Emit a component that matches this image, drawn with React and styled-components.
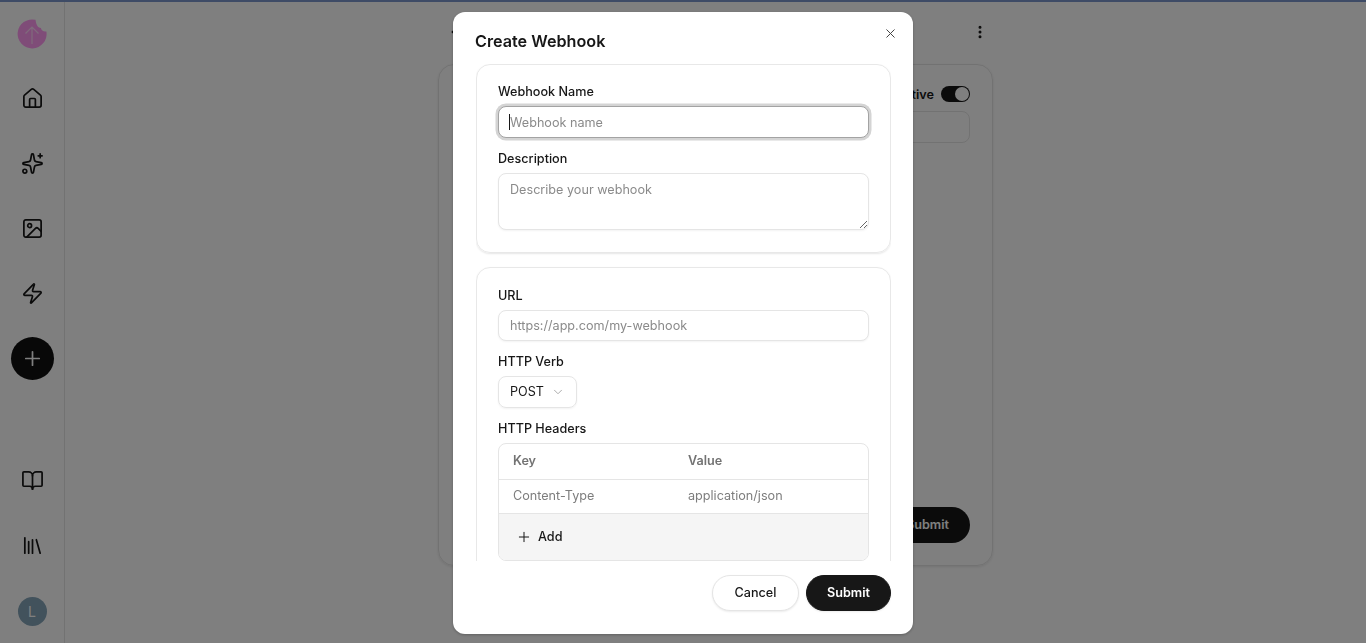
import React from "react";
import styled, { createGlobalStyle } from "styled-components";
import {
  ArrowLeft,
  House,
  Sparkles,
  Image,
  Zap,
  Plus,
  BookOpen,
  Library,
  X,
  EllipsisVertical,
  ChevronDown,
} from "lucide-react";

const GlobalStyle = createGlobalStyle`
  * {
    box-sizing: border-box;
  }
  html, body {
    margin: 0;
    height: 100%;
    overflow: hidden;
    background: #fff;
    font-family: Inter, "Liberation Sans", sans-serif;
    color: #171717;
  }
`;

const Page = styled.div`
  display: flex;
  height: 643px;
  border-top: 2px solid #7d97cc;
`;

const Sidebar = styled.nav`
  width: 65px;
  flex: none;
  display: flex;
  flex-direction: column;
  align-items: center;
  padding: 17px 0 17px;
  border-right: 1px solid #e5e5e5;
`;

const LogoSlot = styled.div`
  height: 30px;
  margin-bottom: 28px;
  display: flex;
`;

const NavItem = styled.div`
  width: 43px;
  height: 43px;
  margin-bottom: 22px;
  display: flex;
  align-items: center;
  justify-content: center;
  color: #171717;
`;

const AddButton = styled(NavItem)`
  border-radius: 50%;
  background: #111;
  color: #fff;
  margin-bottom: 0;
`;

const Spacer = styled.div`
  flex: 1;
`;

const Avatar = styled.div`
  width: 29px;
  height: 29px;
  margin-top: 8px;
  border-radius: 50%;
  background: #84a4b8;
  color: #fff;
  display: flex;
  align-items: center;
  justify-content: center;
  font-size: 14px;
`;

const Main = styled.main`
  flex: 1;
  display: flex;
  flex-direction: column;
  align-items: center;
  padding-top: 22px;
`;

const TopRow = styled.div`
  width: 555px;
  height: 40px;
  padding: 0 5px 0 11px;
  display: flex;
  justify-content: space-between;
  color: #171717;
`;

const BackCard = styled.section`
  width: 555px;
  height: 502px;
  padding: 21px 22px 22px;
  border: 1px solid #e5e5e5;
  border-radius: 16px;
  box-shadow: 0 1px 3px rgba(0, 0, 0, 0.1);
  display: flex;
  flex-direction: column;
  align-items: flex-end;
`;

const ActiveRow = styled.div`
  display: flex;
  align-items: center;
  gap: 7px;
  font-size: 12.64px;
  font-weight: 600;
`;

const Toggle = styled.div`
  width: 29px;
  height: 16px;
  border-radius: 8px;
  background: #171717;
  padding: 1px;
  display: flex;
  justify-content: flex-end;
  &::after {
    content: "";
    width: 14px;
    height: 14px;
    border-radius: 50%;
    background: #fff;
  }
`;

const BackInput = styled.div`
  width: 100%;
  height: 32px;
  margin-top: 9px;
  border: 1px solid #e5e5e5;
  border-radius: 8px;
`;

const BackSubmit = styled.div`
  margin-top: auto;
  width: 85px;
  height: 36px;
  padding-bottom: 2px;
  border-radius: 18px;
  background: #171717;
  color: #fff;
  font-size: 12.64px;
  font-weight: 600;
  display: flex;
  align-items: center;
  justify-content: center;
`;

const Overlay = styled.div`
  position: fixed;
  inset: 0;
  background: rgba(0, 0, 0, 0.5);
  display: flex;
  justify-content: center;
  padding-top: 12px;
`;

const Modal = styled.div`
  position: relative;
  width: 460px;
  height: 622px;
  background: #fff;
  border-radius: 12px;
  box-shadow: 0 1px 3px rgba(0, 0, 0, 0.25);
  display: flex;
  flex-direction: column;
  padding: 0 22px 23px 23px;
`;

const Title = styled.h2`
  margin: 0 0 0 -1px;
  height: 52px;
  padding-top: 19px;
  font-size: 16.2px;
  line-height: 20px;
  font-weight: 600;
`;

const CloseButton = styled.button`
  position: absolute;
  top: 14px;
  right: 15px;
  width: 15px;
  height: 15px;
  padding: 0;
  border: none;
  background: none;
  color: #444;
  display: flex;
`;

const Body = styled.div`
  height: 497px;
  overflow: hidden;
  display: flex;
  flex-direction: column;
  gap: 14px;
  flex: none;
`;

const Card = styled.div`
  flex: none;
  border: 1px solid #e8e8e8;
  border-radius: 14px;
  box-shadow: 0 1px 2px rgba(0, 0, 0, 0.1);
  padding: 18px 21px 22px;
  display: flex;
  flex-direction: column;
`;

const Label = styled.label`
  padding-top: 1px;
  font-size: 12.64px;
  line-height: 16px;
  font-weight: 500;
  margin-top: ${(p) => p.$offset || 0}px;
  margin-bottom: 6px;
`;

const fieldStyle = `
  width: 100%;
  border: 1px solid #e5e5e5;
  border-radius: 8px;
  box-shadow: 0 1px 2px rgba(0, 0, 0, 0.05);
  padding: 0 11px;
  font-family: Inter, "Liberation Sans", sans-serif;
  font-size: 12.64px;
  color: #171717;
  background: #fff;
  &::placeholder {
    color: #8a8a8a;
    opacity: 1;
  }
`;

const InputWrap = styled.div`
  position: relative;
  margin-bottom: 12px;
  display: flex;
`;

const Input = styled.input`
  ${fieldStyle}
  height: ${(p) => p.$height || 32}px;
  caret-color: transparent;
  &:focus {
    outline: none;
    border-color: #a3a3a3;
    box-shadow: 0 0 0 2.5px #d4d4d4;
  }
`;

const Caret = styled.span`
  position: absolute;
  left: 11px;
  top: 8px;
  width: 1px;
  height: 16px;
  background: #171717;
`;

const Textarea = styled.textarea`
  ${fieldStyle}
  display: block;
  height: 57px;
  padding-top: 8px;
  line-height: 16px;
  resize: vertical;
`;

const Select = styled.div`
  width: 79px;
  height: 32px;
  margin-bottom: 12px;
  padding: 0 0 1px 11px;
  border: 1px solid #e5e5e5;
  border-radius: 8px;
  box-shadow: 0 1px 2px rgba(0, 0, 0, 0.05);
  display: flex;
  align-items: center;
  gap: 7px;
  font-size: 12.64px;
  color: #a0a0a0;
  span {
    color: #171717;
  }
`;

const HeadersTable = styled.div`
  border: 1px solid #e5e5e5;
  border-radius: 8px;
  overflow: hidden;
`;

const Row = styled.div`
  display: grid;
  grid-template-columns: 175px 1fr;
  align-items: center;
  height: ${(p) => p.$height}px;
  padding: 0 0 2px 14px;
  border-bottom: 1px solid #e5e5e5;
  font-size: 12.64px;
  font-weight: ${(p) => (p.$head ? 600 : 400)};
  color: ${(p) => (p.$head ? "#737373" : "#7d7d7d")};
`;

const AddRow = styled.div`
  height: 46px;
  padding: 0 0 1px 17px;
  background: #f5f5f5;
  display: flex;
  align-items: center;
  gap: 6px;
  font-size: 12.64px;
  font-weight: 500;
`;

const Footer = styled.div`
  margin-top: 14px;
  display: flex;
  justify-content: flex-end;
  gap: 7px;
`;

const Button = styled.button`
  height: 36px;
  width: ${(p) => (p.$primary ? 85 : 87)}px;
  padding: 0 0 2px;
  border-radius: 18px;
  border: 1px solid ${(p) => (p.$primary ? "#171717" : "#e5e5e5")};
  background: ${(p) => (p.$primary ? "#171717" : "#fff")};
  color: ${(p) => (p.$primary ? "#fff" : "#171717")};
  font-family: Inter, "Liberation Sans", sans-serif;
  font-size: 12.64px;
  font-weight: ${(p) => (p.$primary ? 600 : 500)};
  box-shadow: 0 1px 2px rgba(0, 0, 0, 0.08);
`;

const Logo = () => (
  <svg width="30" height="30" viewBox="0 0 30 30">
    <path
      d="M18.500 .8A14.500 14.500 0 1 0 29.400 12.500c-3 .5-5-1-5.500-3.500-2.500 0-4.500-2-5.400-8.200z"
      fill="#ff98f0"
    />
    <path d="M15 25V8M8.500 14.500 15 8l6.500 6.500" fill="none" stroke="#fff" strokeOpacity=".6" strokeWidth="1.200" />
  </svg>
);

const navIcon = { size: 23, strokeWidth: 1.800 };

export default function App() {
  return (
    <>
      <GlobalStyle />
      <Page>
        <Sidebar>
          <LogoSlot>
            <Logo />
          </LogoSlot>
          <NavItem>
            <House {...navIcon} />
          </NavItem>
          <NavItem>
            <Sparkles {...navIcon} />
          </NavItem>
          <NavItem>
            <Image {...navIcon} />
          </NavItem>
          <NavItem>
            <Zap {...navIcon} />
          </NavItem>
          <AddButton>
            <Plus {...navIcon} />
          </AddButton>
          <Spacer />
          <NavItem>
            <BookOpen {...navIcon} />
          </NavItem>
          <NavItem>
            <Library {...navIcon} />
          </NavItem>
          <Avatar>L</Avatar>
        </Sidebar>
        <Main>
          <TopRow>
            <ArrowLeft size={16} />
            <EllipsisVertical size={16} strokeWidth={2.500} />
          </TopRow>
          <BackCard>
            <ActiveRow>
              Active
              <Toggle />
            </ActiveRow>
            <BackInput />
            <BackSubmit>Submit</BackSubmit>
          </BackCard>
        </Main>
      </Page>
      <Overlay>
        <Modal>
          <Title>Create Webhook</Title>
          <CloseButton aria-label="Close">
            <X size={15} strokeWidth={1.600} />
          </CloseButton>
          <Body>
            <Card>
              <Label>Webhook Name</Label>
              <InputWrap>
                <Input placeholder="Webhook name" autoFocus />
                <Caret />
              </InputWrap>
              <Label>Description</Label>
              <Textarea placeholder="Describe your webhook" />
            </Card>
            <Card>
              <Label $offset={1}>URL</Label>
              <InputWrap>
                <Input placeholder="https://app.com/my-webhook" $height={31} />
              </InputWrap>
              <Label>HTTP Verb</Label>
              <Select>
                <span>POST</span>
                <ChevronDown size={14} strokeWidth={1.500} />
              </Select>
              <Label>HTTP Headers</Label>
              <HeadersTable>
                <Row $head $height={36}>
                  <div>Key</div>
                  <div>Value</div>
                </Row>
                <Row $height={34}>
                  <div>Content-Type</div>
                  <div>application/json</div>
                </Row>
                <AddRow>
                  <Plus size={16} strokeWidth={1.500} />
                  Add
                </AddRow>
              </HeadersTable>
            </Card>
          </Body>
          <Footer>
            <Button>Cancel</Button>
            <Button $primary>Submit</Button>
          </Footer>
        </Modal>
      </Overlay>
    </>
  );
}
